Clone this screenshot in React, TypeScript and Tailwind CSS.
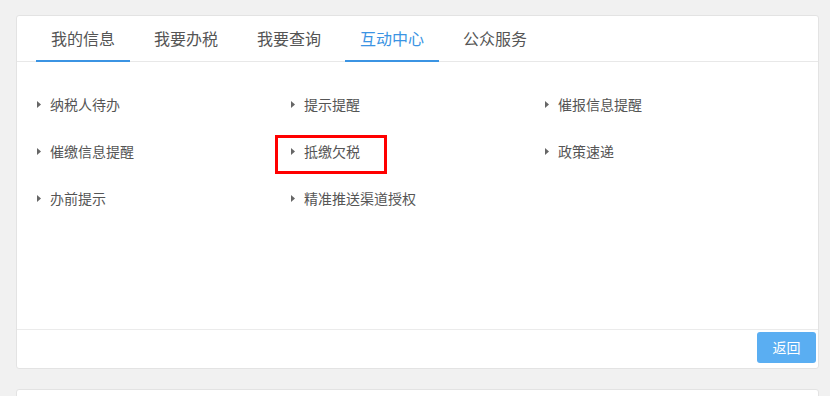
import * as React from "react";

const tabs = ["我的信息", "我要办税", "我要查询", "互动中心", "公众服务"];

const items = [
  "纳税人待办",
  "提示提醒",
  "催报信息提醒",
  "催缴信息提醒",
  "抵缴欠税",
  "政策速递",
  "办前提示",
  "精准推送渠道授权",
];

const Arrow = () => (
  <svg width="4" height="7" viewBox="0 0 4 7" className="mr-[9px] shrink-0">
    <path d="M0 0 L4 3.5 L0 7 Z" fill="#666" />
  </svg>
);

export default function App() {
  return (
    <div
      className="h-[396px] overflow-hidden bg-[#f1f1f1] pt-[15px] pl-4 pr-[11px]"
      style={{ fontFamily: '"Noto Sans CJK SC", "Noto Sans", sans-serif' }}
    >
      <div className="relative bg-white border border-[#e3e3e3] rounded-[3px]">
        {/* tab bar */}
        <div className="flex h-[46px] gap-[9px] pl-[19px] border-b border-[#e8e8e8]">
          {tabs.map((t, i) => {
            const active = i === 3;
            return (
              <div
                key={t}
                className={`w-[94px] flex items-center justify-center text-[16px] -mb-px border-b-2 ${
                  active
                    ? "text-[#3b94e3] border-[#3b94e3]"
                    : i === 0
                    ? "text-[#555] border-[#3b94e3]"
                    : "text-[#555] border-transparent"
                }`}
              >
                {t}
              </div>
            );
          })}
        </div>

        {/* body */}
        <div className="h-[267px] pt-[19px] pl-[20px]">
          <div className="grid grid-cols-[254px_254px_254px]">
            {items.map((it) => (
              <div key={it} className="h-[47px] flex items-center text-[14px] text-[#555]">
                <Arrow />
                {it}
              </div>
            ))}
          </div>
        </div>

        {/* footer */}
        <div className="h-[39px] border-t border-[#ebebeb] flex justify-end pt-[2px] pr-[2px]">
          <button className="w-[59px] h-[31px] rounded-[3px] bg-[#5aaef2] text-white text-[14px]">
            返回
          </button>
        </div>

        {/* highlight annotation */}
        <div className="absolute left-[258px] top-[119px] w-[112px] h-[39px] border-[3px] border-[#ff0000]" />
      </div>

      <div className="mt-5 h-[40px] bg-white border border-[#e3e3e3] rounded-[3px]" />
    </div>
  );
}
